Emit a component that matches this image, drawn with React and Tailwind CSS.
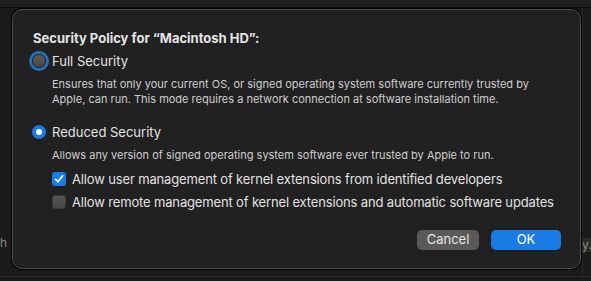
import React from "react";

function Radio({ checked, focused }) {
  if (checked) {
    return (
      <span className="flex h-[14px] w-[14px] shrink-0 items-center justify-center rounded-full bg-[#1b7be4]">
        <span className="h-[6px] w-[6px] rounded-full bg-white" />
      </span>
    );
  }
  return (
    <span
      className={
        "h-[14px] w-[14px] shrink-0 rounded-full border border-[#2c2c2c] bg-[linear-gradient(#5e5e5e,#474747)] " +
        (focused ? "shadow-[0_0_0_3px_#2470b8]" : "")
      }
    />
  );
}

function Checkbox({ checked }) {
  if (checked) {
    return (
      <span className="flex h-[14px] w-[14px] shrink-0 items-center justify-center rounded-[3px] bg-[#1b7be4]">
        <svg width="10" height="10" viewBox="0 0 10 10" fill="none">
          <path d="M1.6 5.3 L4 7.8 L8.6 1.8" stroke="white" strokeWidth="1.7" strokeLinecap="round" strokeLinejoin="round" />
        </svg>
      </span>
    );
  }
  return <span className="h-[14px] w-[14px] shrink-0 rounded-[3px] border border-[#3a3a3a] bg-[linear-gradient(#555555,#474747)]" />;
}

export default function App() {
  return (
    <div className="relative h-[281px] w-[591px] overflow-hidden bg-[#1a1a1a] font-['Inter','Liberation_Sans',sans-serif] text-[#e2e2e2]">
      {/* window content behind the sheet */}
      <div className="absolute left-0 top-[236px] text-[12px] leading-[14px] text-[#8a8a8a]">h</div>
      <div className="absolute right-0 top-[238px] h-[14px] w-[9px] overflow-hidden bg-[#2a2a2a] text-[12px] leading-[14px] text-[#8a8a8a]">y.</div>
      <div className="absolute left-0 top-[276px] h-px w-full bg-[#2e2e2e]" />
      <div className="absolute right-[8px] top-[9px] h-[267px] w-px bg-[#262626]" />

      <div className="relative h-[8px] border-b border-[#0c0c0c] bg-[#1f1f1f]" />

      <div className="relative ml-[12px] mt-px flex h-[260px] w-[569px] flex-col rounded-[10px] border border-[#4d4d4d] bg-[#212121] pl-[19px] pr-[19px] pt-[20px] shadow-[0_0_0_1px_#000]">
        <div className="pl-px text-[13px] font-bold leading-[16px] text-[#e4e4e4]">Security Policy for “Macintosh HD”:</div>

        <div className="mt-[7px] flex h-[16px] items-center gap-[6px]">
          <Radio focused />
          <span className="text-[13px] leading-[16px]">Full Security</span>
        </div>
        <div className="mt-[8px] whitespace-nowrap pl-[20px] text-[11px] leading-[15px] text-[#cfcfcf]">
          Ensures that only your current OS, or signed operating system software currently trusted by
          <br />
          Apple, can run. This mode requires a network connection at software installation time.
        </div>

        <div className="mt-[17px] flex h-[16px] items-center gap-[6px]">
          <Radio checked />
          <span className="text-[13px] leading-[16px]">Reduced Security</span>
        </div>
        <div className="mt-[8px] whitespace-nowrap pl-[20px] text-[11px] leading-[15px] text-[#cfcfcf]">
          Allows any version of signed operating system software ever trusted by Apple to run.
        </div>

        <div className="mt-[8px] flex h-[16px] items-center gap-[6px] pl-[20px]">
          <Checkbox checked />
          <span className="whitespace-nowrap text-[13px] leading-[16px] tracking-[-0.15px]">Allow user management of kernel extensions from identified developers</span>
        </div>
        <div className="mt-[7px] flex h-[16px] items-center gap-[6px] pl-[20px]">
          <Checkbox />
          <span className="whitespace-nowrap text-[13px] leading-[16px] tracking-[-0.15px]">Allow remote management of kernel extensions and automatic software updates</span>
        </div>

        <div className="mt-[20px] flex justify-end gap-[12px]">
          <button className="flex h-[20px] w-[62px] items-center justify-center rounded-[5px] bg-[#5a5a5a] text-[13px] text-[#e6e6e6]">Cancel</button>
          <button className="flex h-[20px] w-[70px] items-center justify-center rounded-[5px] bg-[#1b7be4] text-[13px] text-white">OK</button>
        </div>
      </div>
    </div>
  );
}
